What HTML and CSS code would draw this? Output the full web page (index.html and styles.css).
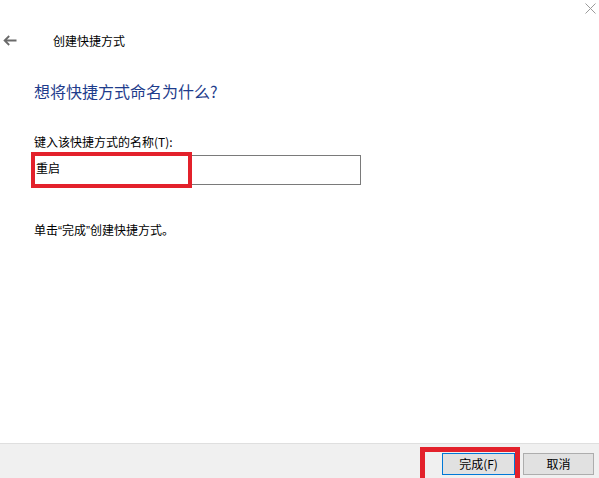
FILE: index.html
```html
<!DOCTYPE html>
<html lang="zh-CN">
<head>
<meta charset="utf-8">
<title>创建快捷方式</title>
<link rel="stylesheet" href="styles.css">
</head>
<body>
<div class="window">
  <div class="main">
    <div class="titlebar">
      <svg class="close" width="11" height="11" viewBox="0 0 11 11"><path d="M0.5 0.5 L10.5 10.5 M10.5 0.5 L0.5 10.5" stroke="#9a9a9a" stroke-width="1" fill="none"/></svg>
    </div>
    <div class="nav">
      <svg class="back" width="14" height="11" viewBox="0 0 14 11"><path d="M13.5 5.5 H1.8 M6.2 1 L1.6 5.5 L6.2 10" stroke="#6a6a6a" stroke-width="1.8" fill="none"/></svg>
      <span class="nav-title">创建快捷方式</span>
    </div>
    <div class="content">
      <h1 class="heading">想将快捷方式命名为什么?</h1>
      <div class="label">键入该快捷方式的名称(T):</div>
      <div class="field">
        <input class="name-input" type="text" value="重启">
        <div class="mark mark-input"></div>
      </div>
      <div class="hint">单击<span class="q">“</span>完成<span class="q">”</span>创建快捷方式。</div>
    </div>
  </div>
  <div class="footer">
    <div class="btn-wrap">
      <button class="btn btn-primary">完成(F)</button>
      <div class="mark mark-btn"></div>
    </div>
    <button class="btn">取消</button>
  </div>
</div>
</body>
</html>
```

FILE: styles.css
```css
html, body {
  margin: 0;
  padding: 0;
  background: #ffffff;
  overflow: hidden;
}
body {
  font-family: "Noto Sans CJK SC", "Microsoft YaHei", sans-serif;
  font-size: 12px;
  color: #000000;
}
.window {
  width: 599px;
  height: 478px;
  display: flex;
  flex-direction: column;
}
.main {
  flex: 1;
  background: #ffffff;
}
.titlebar {
  height: 32px;
  display: flex;
  justify-content: flex-end;
  align-items: flex-start;
}
.close {
  margin-top: 3px;
  margin-right: 3px;
}
.nav {
  height: 17px;
  display: flex;
  align-items: center;
}
.back {
  margin-left: 3px;
}
.nav-title {
  margin-left: 36px;
  line-height: 17px;
}
.content {
  padding-left: 34px;
}
.heading {
  margin: 31px 0 0 0;
  font-size: 16px;
  font-weight: normal;
  line-height: 22px;
  color: #1e3c8c;
}
.label {
  margin-top: 32px;
  line-height: 16px;
}
.field {
  position: relative;
  margin-top: 5px;
  margin-left: -1px;
  width: 328px;
  height: 30px;
}
.name-input {
  box-sizing: border-box;
  width: 328px;
  height: 30px;
  border: 1px solid #7a7a7a;
  padding: 0 2px 5px 2px;
  margin: 0;
  font-family: "Noto Sans CJK SC", "Microsoft YaHei", sans-serif;
  font-size: 12px;
  color: #000000;
  outline: none;
  background: #ffffff;
}
.hint {
  margin-top: 37px;
  line-height: 16px;
}
.q {
  font-family: "Liberation Sans", sans-serif;
}
.mark {
  position: absolute;
  box-sizing: border-box;
  border-style: solid;
  border-color: #e3212b;
  pointer-events: none;
}
.mark-input {
  left: -2px;
  top: -3px;
  width: 161px;
  height: 36px;
  border-width: 4px;
}
.footer {
  box-sizing: border-box;
  height: 35px;
  border-top: 1px solid #dfdfdf;
  background: #f0f0f0;
  display: flex;
  justify-content: flex-end;
  align-items: flex-start;
  padding-top: 9px;
  padding-right: 5px;
  gap: 8px;
}
.btn-wrap {
  position: relative;
}
.btn {
  box-sizing: border-box;
  width: 71px;
  height: 22px;
  margin: 0;
  padding: 0;
  border: 1px solid #adadad;
  background: #e1e1e1;
  font-family: "Noto Sans CJK SC", "Microsoft YaHei", sans-serif;
  font-size: 12px;
  color: #000000;
  line-height: 18px;
}
.btn-primary {
  width: 73px;
  border-color: #0078d7;
}
.mark-btn {
  left: -22px;
  top: -6px;
  width: 100px;
  height: 40px;
  border-width: 5px;
}
```
